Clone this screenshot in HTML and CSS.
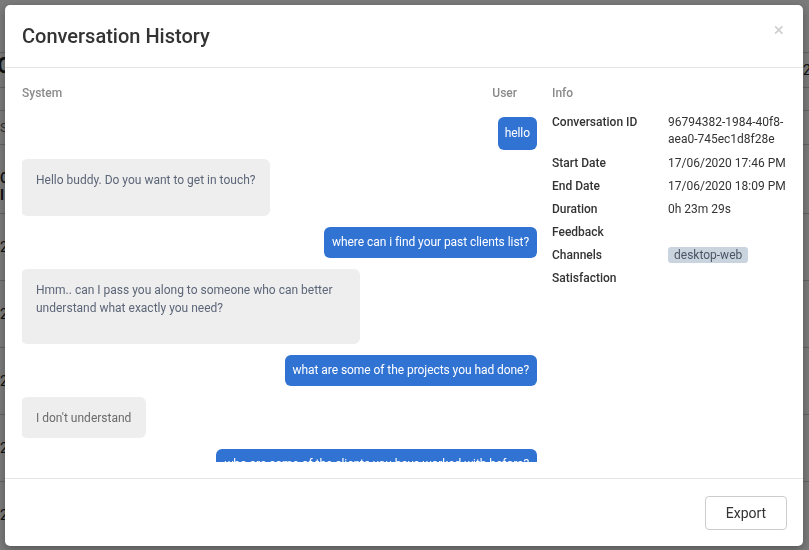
FILE: index.html
```html
<!DOCTYPE html>
<html lang="en">
<head>
<meta charset="utf-8">
<title>Conversation History</title>
<link rel="stylesheet" href="styles.css">
</head>
<body>
<div class="app">
  <div class="topbar">
    <span class="app-title">C</span>
    <span class="app-range">2</span>
  </div>
  <div class="search"><span>S</span></div>
  <div class="thead"><span>C</span><b>I</b></div>
  <div class="trow"><span>2</span></div>
  <div class="trow"><span>2</span></div>
  <div class="trow"><span>2</span></div>
  <div class="trow"><span>2</span></div>
  <div class="trow"><span>2</span></div>
</div>
<div class="backdrop"></div>
<div class="modal">
  <div class="modal-header">
    <h4 class="modal-title">Conversation History</h4>
    <span class="close">×</span>
  </div>
  <div class="modal-body">
    <div class="chat">
      <div class="col-heads"><span>System</span><span class="user-head">User</span></div>
      <div class="messages">
        <div class="msg user first">hello</div>
        <div class="msg system">Hello buddy. Do you want to get in touch?</div>
        <div class="msg user">where can i find your past clients list?</div>
        <div class="msg system">Hmm.. can I pass you along to someone who can better understand what exactly you need?</div>
        <div class="msg user">what are some of the projects you had done?</div>
        <div class="msg system short">I don't understand</div>
        <div class="msg user">who are some of the clients you have worked with before?</div>
      </div>
    </div>
    <div class="info">
      <div class="col-heads"><span>Info</span></div>
      <dl class="info-grid">
        <dt class="first-row">Conversation ID</dt><dd class="first-row">96794382-1984-40f8-aea0-745ec1d8f28e</dd>
        <dt>Start Date</dt><dd class="nowrap">17/06/2020 17:46 PM</dd>
        <dt>End Date</dt><dd class="nowrap">17/06/2020 18:09 PM</dd>
        <dt>Duration</dt><dd>0h 23m 29s</dd>
        <dt>Feedback</dt><dd></dd>
        <dt>Channels</dt><dd><span class="badge">desktop-web</span></dd>
        <dt>Satisfaction</dt><dd></dd>
      </dl>
    </div>
  </div>
  <div class="modal-footer">
    <button class="btn">Export</button>
  </div>
</div>
</body>
</html>
```

FILE: styles.css
```css
* { box-sizing: border-box; }
html, body { margin: 0; padding: 0; }
body {
  width: 809px;
  height: 550px;
  overflow: hidden;
  font-family: Roboto, "Liberation Sans", sans-serif;
  background: #fff;
  color: #222;
}

/* background page (only thin slivers show beside the modal) */
.app { width: 809px; padding-top: 52px; }
.topbar {
  height: 36px;
  border-top: 1px solid #ccc;
  border-bottom: 1px solid #ccc;
  display: flex;
  justify-content: space-between;
  align-items: center;
  font-size: 14px;
}
.app-title { font-size: 22px; font-weight: 700; margin-top: -10px; margin-left: -3px; }
.app-range { width: 6px; }
.search {
  margin-top: 22px;
  height: 35px;
  border-top: 1px solid #ccc;
  border-bottom: 1px solid #ccc;
  display: flex;
  align-items: center;
  font-size: 13px;
  color: #666;
}
.thead {
  margin-top: 15px;
  height: 53px;
  display: flex;
  flex-direction: column;
  justify-content: center;
  font-size: 14px;
  line-height: 17px;
  font-weight: 500;
}
.trow {
  height: 67px;
  border-top: 1px solid #ccc;
  display: flex;
  align-items: center;
  font-size: 14px;
}

.backdrop {
  position: fixed;
  inset: 0;
  background: rgba(0, 0, 0, 0.52);
}

/* modal */
.modal {
  position: fixed;
  left: 5px;
  top: 5px;
  width: 798px;
  height: 541px;
  background: #fff;
  border-radius: 5px;
  box-shadow: 0 3px 10px rgba(0, 0, 0, 0.3);
  display: flex;
  flex-direction: column;
}
.modal-header {
  height: 63px;
  padding: 0 17px;
  border-bottom: 1px solid #e5e5e5;
  display: flex;
  align-items: center;
  justify-content: space-between;
  flex: none;
}
.modal-title {
  margin: 0;
  font-size: 20px;
  font-weight: 500;
  color: #333;
}
.close {
  font-size: 19px;
  color: #cfcfcf;
  line-height: 1;
  margin-right: 2px;
  margin-top: -14px;
}

.modal-body {
  flex: 1;
  min-height: 0;
  display: flex;
  gap: 15px;
  padding: 18px 17px 16px;
}
.col-heads {
  display: flex;
  justify-content: space-between;
  font-size: 12px;
  line-height: 14px;
  color: #8a8a8a;
  font-weight: 500;
  flex: none;
}
.user-head { padding-right: 20px; }

.chat {
  width: 515px;
  display: flex;
  flex-direction: column;
  min-height: 0;
}
.messages {
  flex: 1;
  min-height: 0;
  overflow: hidden;
  padding-top: 17px;
  display: flex;
  flex-direction: column;
  gap: 11px;
}
.msg {
  font-size: 12px;
  border-radius: 6px;
  flex: none;
}
.msg.user {
  align-self: flex-end;
  background: #3173d3;
  color: #fff;
  line-height: 15px;
  padding: 8px 8px;
  letter-spacing: -0.06px;
}
.msg.user.first { padding: 9px 7px; margin-bottom: -2px; }
.msg.system {
  align-self: flex-start;
  background: #eeeeee;
  color: #5c6678;
  line-height: 18px;
  padding: 12px 15px 27px;
  max-width: 339px;
  margin-left: -1px;
}
.msg.system.short {
  padding: 12px 15px 11px;
  color: #6b6b6b;
}

.info {
  flex: 1;
  display: flex;
  flex-direction: column;
}
.info-grid {
  margin: 11px 0 0;
  display: grid;
  grid-template-columns: 116px 1fr;
  font-size: 12px;
  line-height: 17px;
  color: #333;
}
.info-grid dt {
  font-weight: 500;
  padding: 3px 0;
}
.info-grid dd {
  margin: 0;
  padding: 3px 0;
}
.info-grid .first-row { padding-bottom: 4px; }
.nowrap { white-space: nowrap; }
.badge {
  display: inline-block;
  background: #c9d4df;
  color: #4b5565;
  border-radius: 3px;
  padding: 0 6px;
  line-height: 16px;
}

.modal-footer {
  flex: none;
  height: 68px;
  border-top: 1px solid #e5e5e5;
  display: flex;
  align-items: center;
  justify-content: flex-end;
  padding: 0 16px;
}
.btn {
  font-family: Roboto, "Liberation Sans", sans-serif;
  font-size: 14px;
  color: #333;
  background: #fff;
  border: 1px solid #ccc;
  border-radius: 4px;
  width: 82px;
  height: 34px;
  padding: 0;
}
```
